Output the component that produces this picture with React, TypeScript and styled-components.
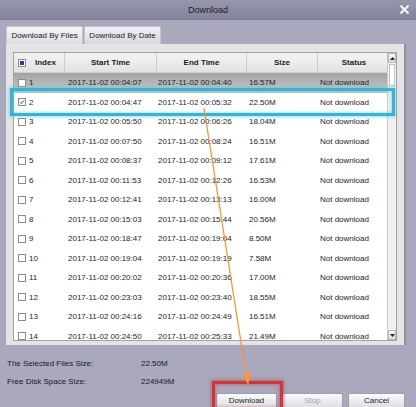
import React, {FC} from 'react';
import styled, {createGlobalStyle} from 'styled-components';

type FileRow = {
  index: number;
  start: string;
  end: string;
  size: string;
  status: string;
  checked?: boolean;
  hover?: boolean;
};

const rows: FileRow[] = [
  {index: 1, start: '00:04:07', end: '00:04:40', size: '16.57M', status: 'Not download', hover: true},
  {index: 2, start: '00:04:47', end: '00:05:32', size: '22.50M', status: 'Not download', checked: true},
  {index: 3, start: '00:05:50', end: '00:06:26', size: '18.04M', status: 'Not download'},
  {index: 4, start: '00:07:50', end: '00:08:24', size: '16.51M', status: 'Not download'},
  {index: 5, start: '00:08:37', end: '00:09:12', size: '17.61M', status: 'Not download'},
  {index: 6, start: '00:11:53', end: '00:12:26', size: '16.53M', status: 'Not download'},
  {index: 7, start: '00:12:41', end: '00:13:13', size: '16.00M', status: 'Not download'},
  {index: 8, start: '00:15:03', end: '00:15:44', size: '20.56M', status: 'Not download'},
  {index: 9, start: '00:18:47', end: '00:19:04', size: '8.50M', status: 'Not download'},
  {index: 10, start: '00:19:04', end: '00:19:19', size: '7.58M', status: 'Not download'},
  {index: 11, start: '00:20:02', end: '00:20:36', size: '17.00M', status: 'Not download'},
  {index: 12, start: '00:23:03', end: '00:23:40', size: '18.55M', status: 'Not download'},
  {index: 13, start: '00:24:16', end: '00:24:49', size: '16.51M', status: 'Not download'},
  {index: 14, start: '00:24:50', end: '00:25:33', size: '21.49M', status: 'Not download'},
];

const DATE = '2017-11-02';

const GlobalStyle = createGlobalStyle`
  html, body {
    margin: 0;
    padding: 0;
  }
  body {
    font-family: "Liberation Sans", Arial, sans-serif;
    font-size: 8px;
    color: #1e1e1e;
  }
`;

const CheckBox: FC<{checked?: boolean; partial?: boolean}> = ({checked, partial}) => (
  <Box>
    {checked && (
      <svg width="6" height="6" viewBox="0 0 6 6">
        <path d="M1 3.2 L2.4 4.6 L5 1.4" fill="none" stroke="#2a4f9a" strokeWidth="1" />
      </svg>
    )}
    {partial && <Fill />}
  </Box>
);

const App: FC = () => (
  <>
    <GlobalStyle />
    <Window>
      <TitleBar>
        <span />
        <Title>Download</Title>
        <Close>
          <svg width="11" height="11" viewBox="0 0 11 11">
            <path d="M1.5 1.5 L9.5 9.5 M9.5 1.5 L1.5 9.5" stroke="#f2f2f6" strokeWidth="2.2" />
          </svg>
        </Close>
      </TitleBar>

      <Body>
        <Tabs>
          <Tab active>Download By Files</Tab>
          <Tab>Download By Date</Tab>
        </Tabs>

        <Panel>
          <Table>
            <List>
              <HeaderRow>
                <HeadCell>
                  <CheckBox partial />
                  <span>Index</span>
                </HeadCell>
                <HeadCell>Start Time</HeadCell>
                <HeadCell>End Time</HeadCell>
                <HeadCell>Size</HeadCell>
                <HeadCell last>Status</HeadCell>
              </HeaderRow>
              {rows.map(r => (
                <Row key={r.index} hover={r.hover}>
                  <IndexCell>
                    <CheckBox checked={r.checked} />
                    <span>{r.index}</span>
                  </IndexCell>
                  <Cell indent={3}>{`${DATE} ${r.start}`}</Cell>
                  <Cell indent={1}>{`${DATE} ${r.end}`}</Cell>
                  <Cell indent={2}>{r.size}</Cell>
                  <Cell indent={2}>{r.status}</Cell>
                </Row>
              ))}
            </List>
            <ScrollBar>
              <ScrollButton>
                <svg width="5" height="3" viewBox="0 0 5 3">
                  <path d="M0 3 L2.5 0 L5 3 Z" fill="#222" />
                </svg>
              </ScrollButton>
              <Track>
                <Thumb />
              </Track>
              <ScrollButton>
                <svg width="5" height="3" viewBox="0 0 5 3">
                  <path d="M0 0 L5 0 L2.5 3 Z" fill="#222" />
                </svg>
              </ScrollButton>
            </ScrollBar>
          </Table>
        </Panel>

        <Info>
          <span>The Selected Files Size:</span>
          <span>22.50M</span>
          <span>Free Disk Space Size:</span>
          <span>224949M</span>
        </Info>

        <Buttons>
          <Button>Download</Button>
          <Button disabled>Stop</Button>
          <Button wide>Cancel</Button>
        </Buttons>
      </Body>

      <RowHighlight />
      <ButtonHighlight />
      <Arrow width="416" height="407" viewBox="0 0 416 407">
        <line x1="204" y1="108" x2="246.5" y2="377" stroke="#f5953c" strokeWidth="1.3" />
        <path d="M242.5 374 L251.5 373 L248 385 Z" fill="#f5953c" />
      </Arrow>
    </Window>
  </>
);

export default App;

const Window = styled.div`
  position: relative;
  width: 416px;
  height: 407px;
  overflow: hidden;
  background: #a9a8bc;
  display: flex;
  flex-direction: column;
`;

const TitleBar = styled.div`
  height: 19px;
  flex-shrink: 0;
  display: grid;
  grid-template-columns: 1fr auto 1fr;
  align-items: center;
  background: linear-gradient(#9796ad, #85849e);
  border-bottom: 1px solid #7b7a93;
`;

const Title = styled.div`
  font-size: 9px;
  color: #222;
`;

const Close = styled.div`
  justify-self: end;
  display: flex;
  margin-right: 6px;
`;

const Body = styled.div`
  flex: 1;
  display: flex;
  flex-direction: column;
  padding: 6px 0 0 6px;
`;

const Tabs = styled.div`
  display: flex;
  gap: 1px;
  height: 18px;
`;

const Tab = styled.div<{active?: boolean}>`
  width: 77px;
  display: flex;
  align-items: center;
  justify-content: center;
  background: ${p => (p.active ? 'linear-gradient(#f6f6f8, #dcdce2)' : 'linear-gradient(#f2f2f5, #d6d6de)')};
  border: 1px solid #c4c4cf;
  border-bottom: none;
  border-radius: 2px 2px 0 0;
  box-sizing: border-box;
  color: #222;
`;

const Panel = styled.div`
  width: 400px;
  height: 301px;
  box-sizing: border-box;
  padding: 8px 7px 4px 7px;
  background: #e4e4e4;
  border-right: 2px solid #8e8e9e;
`;

const Table = styled.div`
  height: 100%;
  box-sizing: border-box;
  display: flex;
  border: 1px solid #a2a2a2;
  background: #fff;
`;

const List = styled.div`
  width: 376px;
  overflow: hidden;
`;

const columns = '51px 92px 90px 71px 72px';

const HeaderRow = styled.div`
  display: grid;
  grid-template-columns: ${columns};
  height: 20px;
  background: linear-gradient(#f4f4f4, #e2e2e2);
  border-bottom: 1px solid #cfcfcf;
  box-sizing: border-box;
`;

const HeadCell = styled.div<{last?: boolean}>`
  display: flex;
  align-items: center;
  justify-content: center;
  gap: 9px;
  font-weight: bold;
  color: #222;
  border-right: ${p => (p.last ? 'none' : '1px solid #cdcdcd')};
  &:first-child {
    justify-content: flex-start;
    padding-left: 4px;
  }
`;

const Row = styled.div<{hover?: boolean}>`
  display: grid;
  grid-template-columns: ${columns};
  height: 19.5px;
  align-items: center;
  background: ${p => (p.hover ? 'linear-gradient(#a3a3a3, #c9c9c9)' : '#fff')};
`;

const Cell = styled.div<{indent: number}>`
  padding-left: ${p => p.indent}px;
  white-space: nowrap;
`;

const IndexCell = styled.div`
  display: flex;
  align-items: center;
  gap: 3px;
  padding-left: 4px;
`;

const Box = styled.div`
  width: 8px;
  height: 8px;
  box-sizing: border-box;
  border: 1px solid #8c8c8c;
  background: #fff;
  display: flex;
  align-items: center;
  justify-content: center;
  flex-shrink: 0;
`;

const Fill = styled.div`
  width: 4px;
  height: 4px;
  background: #1c3fae;
`;

const ScrollBar = styled.div`
  width: 8px;
  display: flex;
  flex-direction: column;
  border-left: 1px solid #c8c8c8;
  background: #f1f1f1;
`;

const ScrollButton = styled.div`
  height: 10px;
  display: flex;
  align-items: center;
  justify-content: center;
  background: linear-gradient(#f8f8f8, #dedede);
  border: 1px solid #b8b8b8;
  box-sizing: border-box;
`;

const Track = styled.div`
  flex: 1;
  padding-top: 1px;
`;

const Thumb = styled.div`
  height: 22px;
  margin: 0 1px;
  background: #fff;
  border: 1px solid #c2c2c2;
  box-sizing: border-box;
`;

const Info = styled.div`
  display: grid;
  grid-template-columns: 134px auto;
  grid-auto-rows: 18px;
  align-items: center;
  margin-top: 9px;
  padding-left: 1px;
  color: #1a1a1a;
`;

const Buttons = styled.div`
  display: flex;
  justify-content: flex-end;
  gap: 5px;
  margin-top: 3px;
  padding-right: 11px;
`;

const Button = styled.button<{wide?: boolean}>`
  width: ${p => (p.wide ? '57px' : '61px')};
  height: 15px;
  padding: 0;
  font-family: "Liberation Sans", Arial, sans-serif;
  font-size: 8px;
  color: ${p => (p.disabled ? '#a2a2aa' : '#1e1e1e')};
  background: linear-gradient(#fbfbfc, #dedee4);
  border: 1px solid #9e9eac;
  border-radius: 2px;
`;

const RowHighlight = styled.div`
  position: absolute;
  left: 10px;
  top: 88px;
  width: 385px;
  height: 28px;
  box-sizing: border-box;
  border: 3px solid #38b4d2;
  box-shadow: 0 0 3px 1px rgba(80, 200, 230, 0.6), inset 0 0 3px 1px rgba(80, 200, 230, 0.5);
`;

const ButtonHighlight = styled.div`
  position: absolute;
  left: 212px;
  top: 381px;
  width: 71px;
  height: 30px;
  box-sizing: border-box;
  border: 3px solid #c6393c;
  box-shadow: 0 0 3px 1px rgba(200, 60, 60, 0.6), inset 0 0 3px 1px rgba(200, 60, 60, 0.5);
`;

const Arrow = styled.svg`
  position: absolute;
  left: 0;
  top: 0;
  pointer-events: none;
`;
